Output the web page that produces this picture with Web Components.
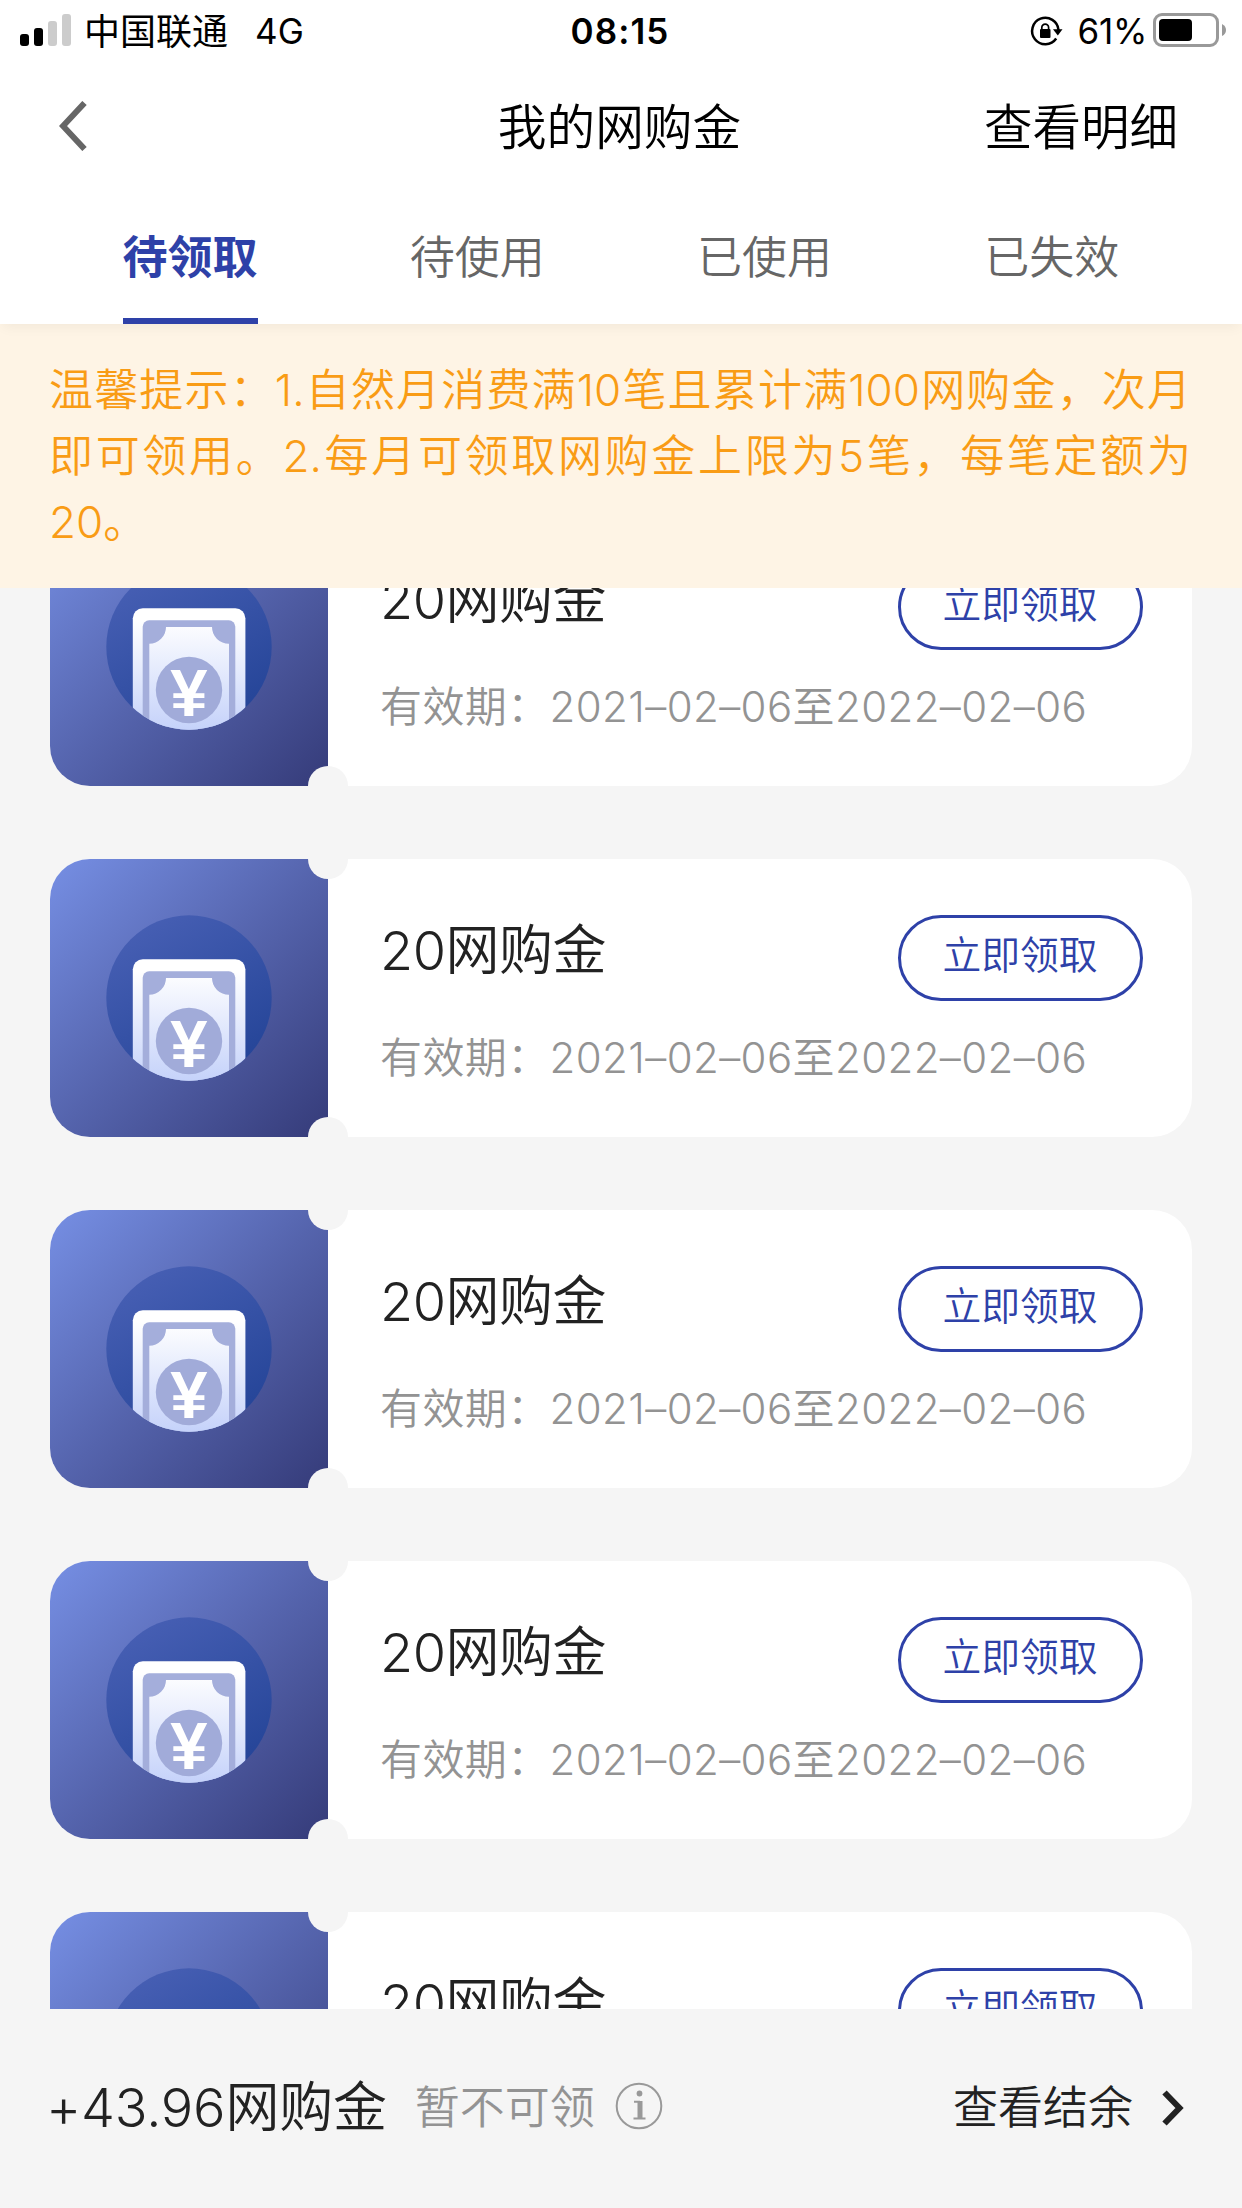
<!DOCTYPE html>
<html lang="zh-CN">
<head>
<meta charset="utf-8">
<title>我的网购金</title>
<style>
html,body{margin:0;height:100%;}
body{background:#f5f5f5;font-family:Inter,"Noto Sans CJK SC",sans-serif;font-weight:350;overflow:hidden;color:#222;}
</style>
</head>
<body>
<coupon-page></coupon-page>
<script>
function define(name, markup) {
  const tpl = document.createElement('template');
  tpl.innerHTML = markup;
  customElements.define(name, class extends HTMLElement {
    constructor() {
      super();
      this.attachShadow({ mode: 'open' }).appendChild(tpl.content.cloneNode(true));
    }
  });
}

define('status-bar', `
<style>
:host{display:grid;grid-template-columns:1fr auto 1fr;align-items:center;height:62px;box-sizing:border-box;padding:0 15px 0 20px;background:#fff;color:#000;font-size:35px;line-height:62px;font-weight:400;}
.left,.right{display:flex;align-items:center;height:62px;}
.left{margin-right:5px;}
.right{justify-content:flex-end;}
svg{display:block;flex:none;}
.carrier{margin-left:13px;font-size:36px;padding-top:2px;}
.net{margin-left:27px;letter-spacing:0;}
.time{font-weight:600;letter-spacing:1.1px;margin-left:-7px;}
.pct{margin:0 6px 0 15px;letter-spacing:-.3px;}
</style>
<div class="left">
<svg width="51" height="62" viewBox="0 0 51 62"><rect y="34" width="9" height="12" rx="3"/><rect x="14" y="28" width="9" height="18" rx="3"/><g fill="#ccc"><rect x="28" y="21" width="9" height="25" rx="3"/><rect x="42" y="14" width="9" height="32" rx="3"/></g></svg>
<span class="carrier">中国联通</span><span class="net">4G</span>
</div>
<span class="time">08:15</span>
<div class="right">
<svg width="34" height="62" viewBox="0 0 34 62"><path d="M27.2 38.5A13.2 13.2 0 1 1 29.5 30" fill="none" stroke="#000" stroke-width="2.5"/><path d="M24 29.3h9.5l-4.7 6.2z"/><rect x="11" y="29" width="10.5" height="9" rx="1"/><path d="M12.800 30v-2.400a3.400 3.400 0 0 1 6.800 0V30" fill="none" stroke="#000" stroke-width="1.7"/></svg>
<span class="pct">61%</span>
<svg width="74" height="62" viewBox="0 0 74 62"><rect x="1.5" y="14.5" width="63" height="31" rx="7.5" fill="none" stroke="#999" stroke-width="3"/><rect x="6" y="19" width="33" height="22" rx="4"/><path d="M69 24q4 2 4 6t-4 6z" fill="#999"/></svg>
</div>`);

define('nav-header', `
<style>
:host{display:grid;grid-template-columns:1fr auto 1fr;align-items:center;height:130px;box-sizing:border-box;padding:1px 64px 0 59px;background:#fff;color:#000;font-size:48.5px;line-height:72px;}
svg{display:block;margin-top:-4px;}
.title{font-size:48.700px;padding-left:2px;}
.more{text-align:right;}
</style>
<svg width="30" height="50" viewBox="0 0 30 50"><path d="M25.500 2L4 25l21.500 23" fill="none" stroke="#666" stroke-width="6"/></svg>
<span class="title"><slot></slot></span>
<span class="more"><slot name="action"></slot></span>`);

define('tab-bar', `
<style>
:host{display:flex;position:relative;z-index:2;height:132px;padding:0 46.5px;box-sizing:border-box;background:#fff;box-shadow:0 6px 12px -3px rgba(0,0,0,.05);}
</style><slot></slot>`);

define('tab-item', `
<style>
:host{flex:1;display:flex;justify-content:center;font-size:45px;color:#666;}
span{box-sizing:border-box;height:132px;line-height:132px;border-bottom:6px solid transparent;}
:host([active]){color:#2e41a8;font-weight:700;}
:host([active]) span{border-color:#2e41a8;}
</style><span><slot></slot></span>`);

define('notice-bar', `
<style>
:host{display:block;position:relative;z-index:1;box-sizing:border-box;height:264px;padding:33px 51px 33px 49px;background:#fef4e5;color:#f99c15;font-size:44px;line-height:66px;text-align:justify;}
</style><slot></slot>`);

define('cash-icon', `
<style>:host{display:block;width:278px;height:278px;}svg{display:block;}</style>
<svg width="278" height="278" viewBox="0 0 278 278">
<defs>
<linearGradient id="bg" x1="0" y1="0" x2="1" y2="1"><stop offset="0" stop-color="#768fe4"/><stop offset=".5" stop-color="#5564ad"/><stop offset="1" stop-color="#353b79"/></linearGradient>
<linearGradient id="disc" x1="0.2" y1="0" x2=".8" y2="1"><stop offset="0" stop-color="#4860b5"/><stop offset="1" stop-color="#234396"/></linearGradient>
<linearGradient id="paper" gradientUnits="userSpaceOnUse" x1="0" y1="112" x2="0" y2="222"><stop offset="0" stop-color="#fff"/><stop offset="1" stop-color="#c5d2fa"/></linearGradient>
<clipPath id="round"><circle cx="139" cy="139" r="82.700"/></clipPath>
</defs>
<path d="M40 0H278V278H40A40 40 0 0 1 0 238V40A40 40 0 0 1 40 0Z" fill="url(#bg)"/>
<circle cx="139" cy="139" r="82.700" fill="url(#disc)"/>
<g clip-path="url(#round)">
<rect x="82.800" y="100.300" width="112.600" height="150" rx="10" fill="url(#paper)"/>
<rect x="92.700" y="112.300" width="92.600" height="140" rx="6.500" fill="#a4aedb"/>
<path d="M116 119H162A16.700 16.700 0 0 0 179 135.700V240H99.300V135.700A16.700 16.700 0 0 0 116 119Z" fill="url(#paper)"/>
<circle cx="139" cy="182" r="33.200" fill="#a1abd9"/>
</g>
<text x="139" y="208.300" text-anchor="middle" font-family="Liberation Sans" font-weight="700" font-size="67" fill="#fff">¥</text>
</svg>`);

define('pill-button', `
<style>
:host{display:block;box-sizing:border-box;width:245px;height:86px;border:3px solid #2e41a8;border-radius:43px;color:#2e41a8;font-size:38.800px;line-height:74px;text-align:center;white-space:nowrap;}
span{margin-right:1px;}
</style><span><slot></slot></span>`);

define('coupon-card', `
<style>
:host{display:flex;flex:none;position:relative;height:278px;background:#fff;border-radius:40px;}
.body{flex:1;display:flex;flex-direction:column;gap:29px;padding:56px 49px 0 52px;}
.row{display:flex;justify-content:space-between;align-items:flex-start;height:86px;}
.name{font-size:54px;line-height:72px;letter-spacing:-.5px;color:#222;}
.date{font-size:42px;line-height:56px;color:#939393;white-space:nowrap;letter-spacing:.4px;}
i{position:absolute;left:258px;width:40px;height:20px;background:#f5f5f5;}
.t{top:0;border-radius:0 0 20px 20px;}
.b{bottom:0;border-radius:20px 20px 0 0;}
</style>
<cash-icon></cash-icon>
<div class="body">
<div class="row"><span class="name"><slot name="name"></slot></span><pill-button>立即领取</pill-button></div>
<div class="date"><slot name="date"></slot></div>
</div>
<i class="t"></i><i class="b"></i>`);

define('coupon-list', `
<style>
:host{display:flex;flex-direction:column;justify-content:flex-end;gap:73px;box-sizing:border-box;height:1421px;overflow:hidden;padding:0 50px;}
::slotted(:last-child){margin-bottom:-181px;}
</style><slot></slot>`);

define('balance-footer', `
<style>
:host{display:flex;align-items:center;box-sizing:border-box;height:199px;padding:0 58px 2px 46px;background:#f5f5f5;font-size:45px;line-height:72px;}
.sum{font-size:54px;letter-spacing:-.2px;}
.note{margin-left:28px;color:#939393;}
svg{display:block;margin-top:-3px;}
.info{margin-left:20px;}
.more{margin-left:auto;}
.arrow{margin-left:29px;}
</style>
<span class="sum"><slot name="sum"></slot></span>
<span class="note"><slot name="note"></slot></span>
<svg class="info" width="48" height="48" viewBox="0 0 48 48" fill="none" stroke="#999"><circle cx="24" cy="24" r="22.300" stroke-width="2"/><circle cx="24.500" cy="11.500" r="2.900" fill="#999" stroke="none"/><path d="M19 19.700h6M18.500 36.500h12" stroke-width="2"/><path d="M25 19v17" stroke-width="5"/></svg>
<span class="more"><slot name="more"></slot></span>
<svg class="arrow" style="margin-top:1px" width="22" height="36" viewBox="0 0 22 36"><path d="M2.500 2.500L17.500 18L2.500 33.500" fill="none" stroke="#222" stroke-width="6"/></svg>`);

define('coupon-page', `
<style>:host{display:flex;flex-direction:column;width:1242px;height:2208px;background:#f5f5f5;overflow:hidden;}</style>
<status-bar></status-bar>
<nav-header>我的网购金<span slot="action">查看明细</span></nav-header>
<tab-bar><tab-item active>待领取</tab-item><tab-item>待使用</tab-item><tab-item>已使用</tab-item><tab-item>已失效</tab-item></tab-bar>
<notice-bar>温馨提示：1.自然月消费满10笔且累计满100网购金，次月即可领用。2.每月可领取网购金上限为5笔，每笔定额为20。</notice-bar>
<coupon-list>${'<coupon-card><span slot="name">20网购金</span><span slot="date">有效期：2021–02–06至2022–02–06</span></coupon-card>'.repeat(4)}<coupon-card><span slot="name">20网购金</span></coupon-card></coupon-list>
<balance-footer><span slot="sum">+43.96网购金</span><span slot="note">暂不可领</span><span slot="more">查看结余</span></balance-footer>`);
</script>
</body>
</html>
